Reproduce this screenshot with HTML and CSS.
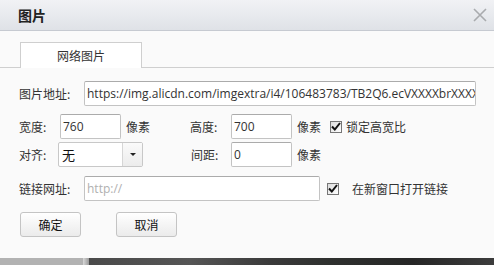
FILE: index.html
```html
<!DOCTYPE html>
<html>
<head>
  <title>图片</title>
  <link rel="stylesheet" href="styles.css">
</head>
<body>
  <div class="dialog">
    <div class="titlebar">
      <span class="title">图片</span>
      <svg class="close" width="14" height="14" viewBox="0 0 14 14">
        <path d="M1 1 L13 13 M13 1 L1 13" stroke="#a9abae" stroke-width="1.6" fill="none"/>
      </svg>
    </div>

    <div class="tabs">
      <div class="tab">网络图片</div>
    </div>

    <div class="form">
      <div class="row row-url">
        <span class="label w65">图片地址:</span>
        <div class="input url">https://img.alicdn.com/imgextra/i4/106483783/TB2Q6.ecVXXXXbrXXXXXXXXXXXX</div>
      </div>

      <div class="row row-size">
        <span class="label w41">宽度:</span>
        <div class="input small">760</div>
        <span class="unit u64">像素</span>
        <span class="label w41">高度:</span>
        <div class="input small">700</div>
        <span class="unit u33">像素</span>
        <span class="check"><svg width="10" height="9" viewBox="0 0 10 9"><path d="M1 4.5 L3.8 7.5 L9 1" stroke="#111" stroke-width="2" fill="none"/></svg></span>
        <span class="check-text">锁定高宽比</span>
      </div>

      <div class="row row-align">
        <span class="label w39">对齐:</span>
        <div class="select">
          <span class="select-value">无</span>
          <span class="select-arrow"><i></i></span>
        </div>
        <span class="label w40 gap48">间距:</span>
        <div class="input small">0</div>
        <span class="unit">像素</span>
      </div>

      <div class="row row-link">
        <span class="label w65">链接网址:</span>
        <div class="input link placeholder">http://</div>
        <span class="check check-link"><svg width="10" height="9" viewBox="0 0 10 9"><path d="M1 4.5 L3.8 7.5 L9 1" stroke="#111" stroke-width="2" fill="none"/></svg></span>
        <span class="check-text link-text">在新窗口打开链接</span>
      </div>

      <div class="buttons">
        <button class="button">确定</button>
        <button class="button">取消</button>
      </div>
    </div>

    <div class="strip">
      <div class="strip-left"></div>
      <div class="strip-edge"></div>
      <div class="strip-photo"></div>
    </div>
  </div>
</body>
</html>
```

FILE: styles.css
```css
body {
  margin: 0;
  background-color: #fafafa;
  color: #333;
  font-family: "Noto Sans CJK SC", "Liberation Sans", sans-serif;
  font-size: 12px;
}

.dialog {
  width: 494px;
  height: 265px;
  display: flex;
  flex-direction: column;
  overflow: hidden;
}

.titlebar {
  height: 30px;
  flex: none;
  display: flex;
  align-items: center;
  justify-content: space-between;
  padding: 0 7px 0 18px;
  background: linear-gradient(#f1f2f5, #dfe2e7);
  border-bottom: 1px solid #c6cad1;
}

.titlebar .title {
  font-size: 14px;
  font-weight: bold;
  color: #222;
}

.tabs {
  flex: none;
  padding: 11px 0 0 20px;
  border-bottom: 1px solid #cfcfcf;
  display: flex;
}

.tab {
  width: 120px;
  height: 25px;
  line-height: 25px;
  text-align: center;
  background-color: #fff;
  border: 1px solid #cfcfcf;
  border-bottom: none;
  margin-bottom: -1px;
  font-size: 12px;
  color: #333;
}

.form {
  padding: 13px 18px 0 19px;
  flex: 1;
}

.row {
  display: flex;
  align-items: center;
  height: 25px;
}

.row-size {
  margin-top: 8px;
}

.row-align {
  margin-top: 3px;
}

.row-link {
  margin-top: 9px;
}

.label {
  flex: none;
  white-space: nowrap;
}

.w65 { width: 65px; }
.w41 { width: 41px; }
.w40 { width: 40px; }
.w39 { width: 39px; }
.gap48 { margin-left: 48px; }

.input {
  box-sizing: border-box;
  height: 25px;
  line-height: 23px;
  padding: 0 2px;
  background-color: #fff;
  border: 1px solid #c3c3c3;
  border-top-color: #ababab;
  border-radius: 2px;
  font-family: "Open Sans", "Liberation Sans", sans-serif;
  font-size: 12px;
  color: #333;
  white-space: nowrap;
  overflow: hidden;
}

.input.url {
  width: 392px;
}

.input.small {
  width: 61px;
}

.input.link {
  width: 236px;
}

.input.placeholder {
  color: #b0b0b0;
}

.unit {
  margin-left: 5px;
  flex: none;
}

.u64 { width: 64px; }
.u33 { width: 33px; }

.select {
  box-sizing: border-box;
  width: 85px;
  height: 25px;
  display: flex;
  background-color: #fff;
  border: 1px solid #c8c8c8;
  border-radius: 2px;
}

.select-value {
  flex: 1;
  padding-left: 3px;
  line-height: 23px;
  font-size: 13px;
  color: #111;
}

.select-arrow {
  width: 19px;
  border-left: 1px solid #d6d6d6;
  background: linear-gradient(#fafafa, #ececec);
  display: flex;
  align-items: center;
  justify-content: center;
}

.select-arrow i {
  width: 0;
  height: 0;
  border-left: 3px solid transparent;
  border-right: 3px solid transparent;
  border-top: 3px solid #222;
}

.check {
  box-sizing: border-box;
  width: 12px;
  height: 12px;
  flex: none;
  display: flex;
  align-items: center;
  justify-content: center;
  border: 1px solid #767676;
  background: linear-gradient(135deg, #dcdcdc, #fff);
}

.check-text {
  margin-left: 4px;
  white-space: nowrap;
}

.check-link {
  margin-left: 7px;
}

.link-text {
  margin-left: 13px;
}

.buttons {
  display: flex;
  margin-top: 11px;
  padding-left: 1px;
}

.button {
  width: 61px;
  height: 25px;
  margin-right: 35px;
  padding: 0;
  background: linear-gradient(#ffffff, #ebebeb);
  border: 1px solid #c4c4c4;
  border-radius: 3px;
  font-family: "Noto Sans CJK SC", sans-serif;
  font-size: 12px;
  color: #111;
}

.strip {
  flex: none;
  height: 7px;
  display: flex;
}

.strip-left {
  width: 83px;
  background-color: #b2b2b2;
}

.strip-edge {
  width: 6px;
  background: linear-gradient(90deg, #d8d8d8, #9a9a9a);
}

.strip-photo {
  flex: 1;
  background: linear-gradient(90deg, #4a4a4a, #555 25%, #3a3a3a 45%, #2e302e 60%, #262626 80%, #3c3c3c);
}
```
